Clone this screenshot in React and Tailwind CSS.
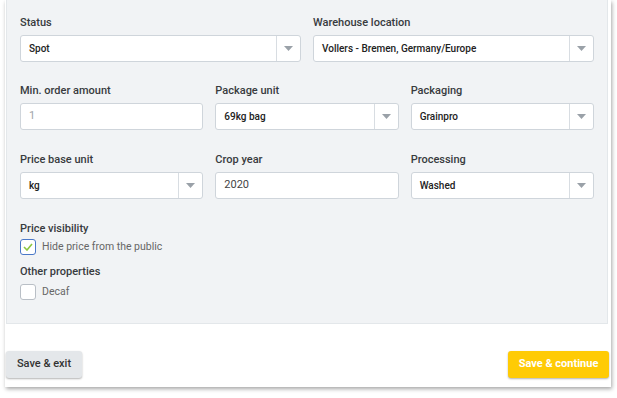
import React from "react";

function Caret() {
  return (
    <svg width="9" height="5" viewBox="0 0 9 5">
      <path d="M0 0h9L4.5 5z" fill="#9aa1a8" />
    </svg>
  );
}

function Select({ value }) {
  return (
    <div className="flex h-[27px] items-stretch rounded-[3px] border border-[#cfd5db] bg-white">
      <div className="flex flex-1 items-center pl-[8px] text-[10px] font-medium text-[#222]">
        {value}
      </div>
      <div className="flex w-[24px] items-center justify-center border-l border-[#d8dde2]">
        <Caret />
      </div>
    </div>
  );
}

function Input({ value, muted }) {
  return (
    <div
      className={`flex h-[27px] items-center rounded-[3px] border border-[#cfd5db] bg-white pl-[8px] text-[11px] ${
        muted ? "text-[#a0a4a8]" : "text-[#444]"
      }`}
    >
      {value}
    </div>
  );
}

function Field({ label, children }) {
  return (
    <div className="flex flex-col gap-[4px]">
      <div className="text-[11px] font-medium leading-[16px] text-[#383b3e]">{label}</div>
      {children}
    </div>
  );
}

function Check({ checked, label }) {
  return (
    <div className="flex items-center gap-[6px]">
      <div
        className={`flex h-[16px] w-[16px] items-center justify-center rounded-[3px] border bg-white ${
          checked ? "border-[#4a78c8]" : "border-[#b9bfc6]"
        }`}
      >
        {checked && (
          <svg width="10" height="8" viewBox="0 0 10 8">
            <path d="M1 4l3 3 5-6" fill="none" stroke="#8cc63f" strokeWidth="1.6" />
          </svg>
        )}
      </div>
      <span className="text-[10.5px] text-[#666]">{label}</span>
    </div>
  );
}

export default function App() {
  return (
    <div
      className="h-[398px] w-[617px] bg-white pl-[5px]"
      style={{ fontFamily: "Roboto, 'Liberation Sans', sans-serif" }}
    >
      <div className="flex h-[387px] w-[606px] flex-col bg-white shadow-[1px_2px_4px_rgba(0,0,0,0.35)]">
        <div className="ml-[1px] flex h-[324px] w-[602px] flex-col border border-t-0 border-[#e3e7ea] bg-[#f1f3f5] px-[13px] pt-[15px]">
          <div className="grid grid-cols-2 gap-[12px]">
            <Field label="Status">
              <Select value="Spot" />
            </Field>
            <Field label="Warehouse location">
              <Select value="Vollers - Bremen, Germany/Europe" />
            </Field>
          </div>
          <div className="mt-[21px] grid grid-cols-3 gap-[12px]">
            <Field label="Min. order amount">
              <Input value="1" muted />
            </Field>
            <Field label="Package unit">
              <Select value="69kg bag" />
            </Field>
            <Field label="Packaging">
              <Select value="Grainpro" />
            </Field>
          </div>
          <div className="mt-[22px] grid grid-cols-3 gap-[12px]">
            <Field label="Price base unit">
              <Select value="kg" />
            </Field>
            <Field label="Crop year">
              <Input value="2020" />
            </Field>
            <Field label="Processing">
              <Select value="Washed" />
            </Field>
          </div>
          <div className="mt-[22px] text-[11px] font-medium leading-[16px] text-[#383b3e]">Price visibility</div>
          <div className="mt-[2px]">
            <Check checked label="Hide price from the public" />
          </div>
          <div className="mt-[9px] text-[11px] font-medium leading-[16px] text-[#383b3e]">Other properties</div>
          <div className="mt-[4px]">
            <Check label="Decaf" />
          </div>
        </div>
        <div className="mt-[27px] flex justify-between pl-[1px] pr-[2px]">
          <button className="h-[27px] w-[76px] rounded-[3px] bg-[#e4e7ea] text-[11px] font-medium text-[#333] shadow-[0_1px_2px_rgba(0,0,0,0.3)]">
            Save &amp; exit
          </button>
          <button className="h-[27px] w-[101px] rounded-[3px] bg-[#ffcb05] text-[11px] font-bold text-white shadow-[0_1px_2px_rgba(0,0,0,0.3)]">
            Save &amp; continue
          </button>
        </div>
      </div>
    </div>
  );
}
